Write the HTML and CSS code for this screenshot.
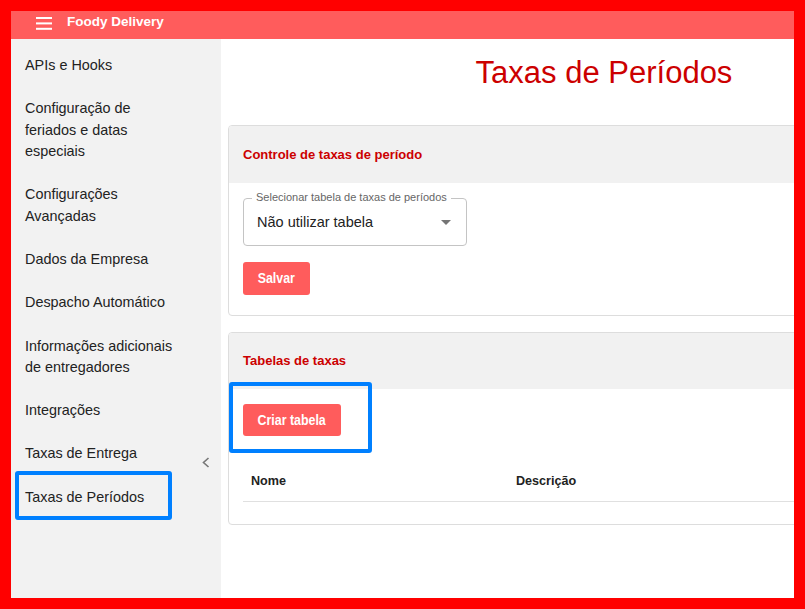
FILE: index.html
```html
<!DOCTYPE html>
<html lang="pt-BR">
<head>
  <meta charset="UTF-8">
  <meta name="viewport" content="width=device-width, initial-scale=1.0">
  <title>Foody Delivery - Taxas de Períodos</title>
  <link rel="stylesheet" href="styles.css">
</head>
<body>
  <div class="app">
    <header class="topbar">
      <svg class="menu-icon" width="16" height="13" viewBox="0 0 16 13">
        <rect x="0" y="0" width="16" height="2" fill="#fff"/>
        <rect x="0" y="5.4" width="16" height="2" fill="#fff"/>
        <rect x="0" y="10.8" width="16" height="2" fill="#fff"/>
      </svg>
      <span class="brand">Foody Delivery</span>
    </header>

    <div class="layout">
      <nav class="sidebar">
        <a class="nav-item">APIs e Hooks</a>
        <a class="nav-item">Configuração de feriados e datas especiais</a>
        <a class="nav-item">Configurações Avançadas</a>
        <a class="nav-item">Dados da Empresa</a>
        <a class="nav-item">Despacho Automático</a>
        <a class="nav-item">Informações adicionais de entregadores</a>
        <a class="nav-item">Integrações</a>
        <a class="nav-item">Taxas de Entrega</a>
        <a class="nav-item is-active">Taxas de Períodos<span class="marker marker-nav"></span></a>

        <button class="collapse" type="button">
          <svg width="8" height="11" viewBox="0 0 8 11">
            <polyline points="6.5,1 1.5,5.5 6.5,10" fill="none" stroke="#777" stroke-width="1.6"/>
          </svg>
        </button>
      </nav>

      <main class="content">
        <h1 class="page-title">Taxas de Períodos</h1>

        <section class="card">
          <div class="card-header">Controle de taxas de período</div>
          <div class="card-body">
            <div class="select-field">
              <span class="select-label">Selecionar tabela de taxas de períodos</span>
              <span class="select-value">Não utilizar tabela</span>
              <svg class="select-arrow" width="10" height="5" viewBox="0 0 10 5">
                <path d="M0 0l5 5 5-5z" fill="#757575"/>
              </svg>
            </div>
            <button class="btn btn-save" type="button"><span class="btn-label">Salvar</span></button>
          </div>
        </section>

        <section class="card">
          <div class="card-header">Tabelas de taxas</div>
          <div class="card-body">
            <div class="btn-wrap">
              <button class="btn btn-create" type="button"><span class="btn-label">Criar tabela</span></button>
              <span class="marker marker-btn"></span>
            </div>
            <table class="rates-table">
              <colgroup>
                <col class="col-name">
                <col>
              </colgroup>
              <thead>
                <tr>
                  <th>Nome</th>
                  <th>Descrição</th>
                </tr>
              </thead>
              <tbody></tbody>
            </table>
          </div>
        </section>
      </main>
    </div>
  </div>

  <div class="frame"></div>
</body>
</html>
```

FILE: styles.css
```css
* {
  box-sizing: border-box;
}

body {
  margin: 0;
  padding: 11px 0 0 11px;
  width: 805px;
  height: 609px;
  overflow: hidden;
  background: #ff0000;
  font-family: "Liberation Sans", Arial, sans-serif;
  color: #222;
}

.app {
  width: 976px;
  height: 587px;
  display: flex;
  flex-direction: column;
  background: #fff;
}

/* top bar */
.topbar {
  height: 28px;
  flex-shrink: 0;
  display: flex;
  align-items: center;
  padding: 0 0 6px 25px;
  background: #ff5c5c;
}

.menu-icon {
  display: block;
  margin-top: 3px;
}

.brand {
  margin-left: 15px;
  font-size: 13.5px;
  line-height: 16px;
  font-weight: bold;
  color: #fff;
}

.layout {
  flex: 1;
  display: flex;
  min-height: 0;
}

/* side menu */
.sidebar {
  position: relative;
  width: 210px;
  flex-shrink: 0;
  padding-top: 5px;
  background: #f2f2f2;
}

.nav-item {
  position: relative;
  display: block;
  padding: 10.8px 38px 10.8px 14px;
  font-size: 14.4px;
  line-height: 21.6px;
  color: #222;
  cursor: pointer;
}

.collapse {
  position: absolute;
  left: 191px;
  top: 418px;
  padding: 0;
  border: 0;
  background: none;
  line-height: 0;
  cursor: pointer;
}

/* highlight boxes */
.marker {
  position: absolute;
  border: 4px solid #0080ff;
  border-radius: 3px;
  pointer-events: none;
}

.marker-nav {
  left: 4px;
  top: -4.5px;
  width: 157px;
  height: 49px;
}

.marker-btn {
  left: -14px;
  top: -22px;
  width: 143px;
  height: 71px;
}

/* main area */
.content {
  flex: 1;
  padding: 0 7px;
}

.page-title {
  margin: 16px 0 34px;
  font-size: 31px;
  line-height: 36px;
  font-weight: normal;
  text-align: center;
  color: #cc0000;
}

.card {
  border: 1px solid #dddddd;
  border-radius: 4px;
  margin-bottom: 16px;
  overflow: hidden;
}

.card-header {
  height: 56.5px;
  padding: 0 14px;
  display: flex;
  align-items: center;
  background: #f1f1f1;
  font-size: 13px;
  font-weight: bold;
  color: #cc0000;
}

.card-body {
  padding: 15px 14px 20px;
}

/* outlined select */
.select-field {
  position: relative;
  width: 224px;
  height: 48px;
  display: flex;
  align-items: center;
  padding: 0 15px 0 13px;
  border: 1px solid #c4c4c4;
  border-radius: 4px;
}

.select-label {
  position: absolute;
  left: 8px;
  top: -8px;
  padding: 0 4px;
  background: #fff;
  font-size: 11px;
  line-height: 13px;
  color: #666;
}

.select-value {
  flex: 1;
  font-size: 14.5px;
  color: #222;
}

.select-arrow {
  display: block;
  margin-top: 1px;
}

/* buttons use a narrow face; squeeze the label */
.btn {
  display: flex;
  align-items: center;
  justify-content: center;
  height: 33px;
  padding: 0;
  border: 0;
  border-radius: 3px;
  background: #ff5c5c;
  color: #fff;
  font-family: "Liberation Sans", Arial, sans-serif;
  font-size: 15.5px;
  font-weight: bold;
  cursor: pointer;
}

.btn-label {
  display: inline-block;
  white-space: nowrap;
  transform: scaleX(0.8);
}

.btn-save {
  width: 67px;
  margin-top: 16px;
}

.btn-create {
  width: 98px;
  height: 32px;
}

.btn-wrap {
  position: relative;
  display: inline-block;
  vertical-align: top;
}

/* rates table */
.rates-table {
  width: 100%;
  margin-top: 25px;
  border-collapse: collapse;
  table-layout: fixed;
}

.col-name {
  width: 265px;
}

.rates-table th {
  height: 40px;
  padding: 0 8px;
  text-align: left;
  font-size: 12.6px;
  font-weight: bold;
  color: #222;
  border-bottom: 1px solid #e0e0e0;
}

.card-body:has(.rates-table) {
  padding-bottom: 22px;
}

/* red outline round the window */
.frame {
  position: fixed;
  inset: 0;
  border: 11px solid #ff0000;
  pointer-events: none;
}
```
